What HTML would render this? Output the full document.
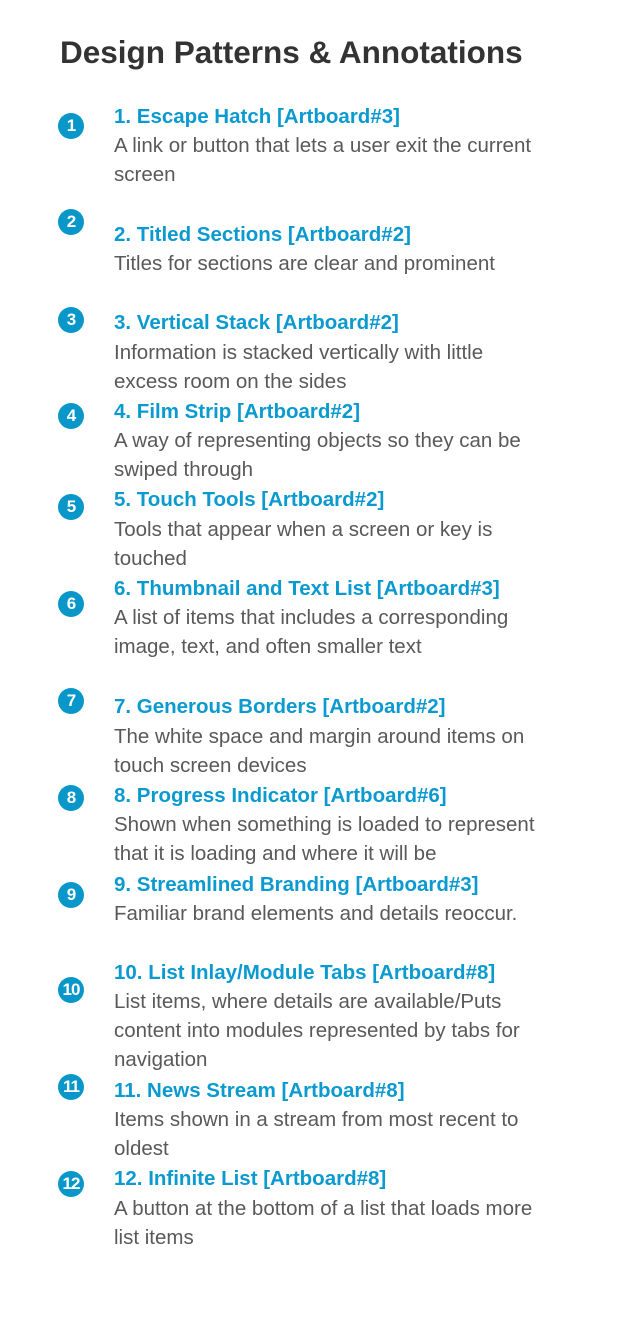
<!DOCTYPE html>
<html><head><meta charset="utf-8"><style>
body{margin:0;width:640px;height:1323px;background:#fff;position:relative;font-family:"Liberation Sans",Arial,sans-serif;overflow:hidden}
h1{position:absolute;left:60px;top:33px;margin:0;font-size:31.5px;line-height:38px;font-weight:bold;color:#333}
.c{position:absolute;left:58px;width:26px;height:26px;border-radius:50%;background:#0997c9;color:#fff;font-weight:bold;font-size:17px;line-height:26px;text-align:center;letter-spacing:-1px}
.t,.d{position:absolute;left:114px;font-size:20.5px;line-height:29px;margin-top:1px}
.t{font-weight:bold;color:#0a9ad0;white-space:nowrap}
.d{color:#595959;width:460px}
</style></head><body>
<h1>Design Patterns &amp; Annotations</h1>

<div class="c" style="top:113px">1</div>
<div class="t" style="top:101px">1. Escape Hatch [Artboard#3]</div>
<div class="d" style="top:130px">A link or button that lets a user exit the current<br>screen</div>

<div class="c" style="top:209px">2</div>
<div class="t" style="top:219px">2. Titled Sections [Artboard#2]</div>
<div class="d" style="top:248px">Titles for sections are clear and prominent</div>

<div class="c" style="top:307px">3</div>
<div class="t" style="top:307px">3. Vertical Stack [Artboard#2]</div>
<div class="d" style="top:337px">Information is stacked vertically with little<br>excess room on the sides</div>

<div class="c" style="top:403px">4</div>
<div class="t" style="top:396px">4. Film Strip [Artboard#2]</div>
<div class="d" style="top:425px">A way of representing objects so they can be<br>swiped through</div>

<div class="c" style="top:494px">5</div>
<div class="t" style="top:484px">5. Touch Tools [Artboard#2]</div>
<div class="d" style="top:514px">Tools that appear when a screen or key is<br>touched</div>

<div class="c" style="top:591px">6</div>
<div class="t" style="top:573px">6. Thumbnail and Text List [Artboard#3]</div>
<div class="d" style="top:602px">A list of items that includes a corresponding<br>image, text, and often smaller text</div>

<div class="c" style="top:688px">7</div>
<div class="t" style="top:691px">7. Generous Borders [Artboard#2]</div>
<div class="d" style="top:721px">The white space and margin around items on<br>touch screen devices</div>

<div class="c" style="top:785px">8</div>
<div class="t" style="top:780px">8. Progress Indicator [Artboard#6]</div>
<div class="d" style="top:809px">Shown when something is loaded to represent<br>that it is loading and where it will be</div>

<div class="c" style="top:882px">9</div>
<div class="t" style="top:869px">9. Streamlined Branding [Artboard#3]</div>
<div class="d" style="top:898px">Familiar brand elements and details reoccur.</div>

<div class="c" style="top:977px">10</div>
<div class="t" style="top:957px">10. List Inlay/Module Tabs [Artboard#8]</div>
<div class="d" style="top:986px">List items, where details are available/Puts<br>content into modules represented by tabs for<br>navigation</div>

<div class="c" style="top:1074px">11</div>
<div class="t" style="top:1075px">11. News Stream [Artboard#8]</div>
<div class="d" style="top:1104px">Items shown in a stream from most recent to<br>oldest</div>

<div class="c" style="top:1171px">12</div>
<div class="t" style="top:1163px">12. Infinite List [Artboard#8]</div>
<div class="d" style="top:1193px">A button at the bottom of a list that loads more<br>list items</div>
</body></html>
